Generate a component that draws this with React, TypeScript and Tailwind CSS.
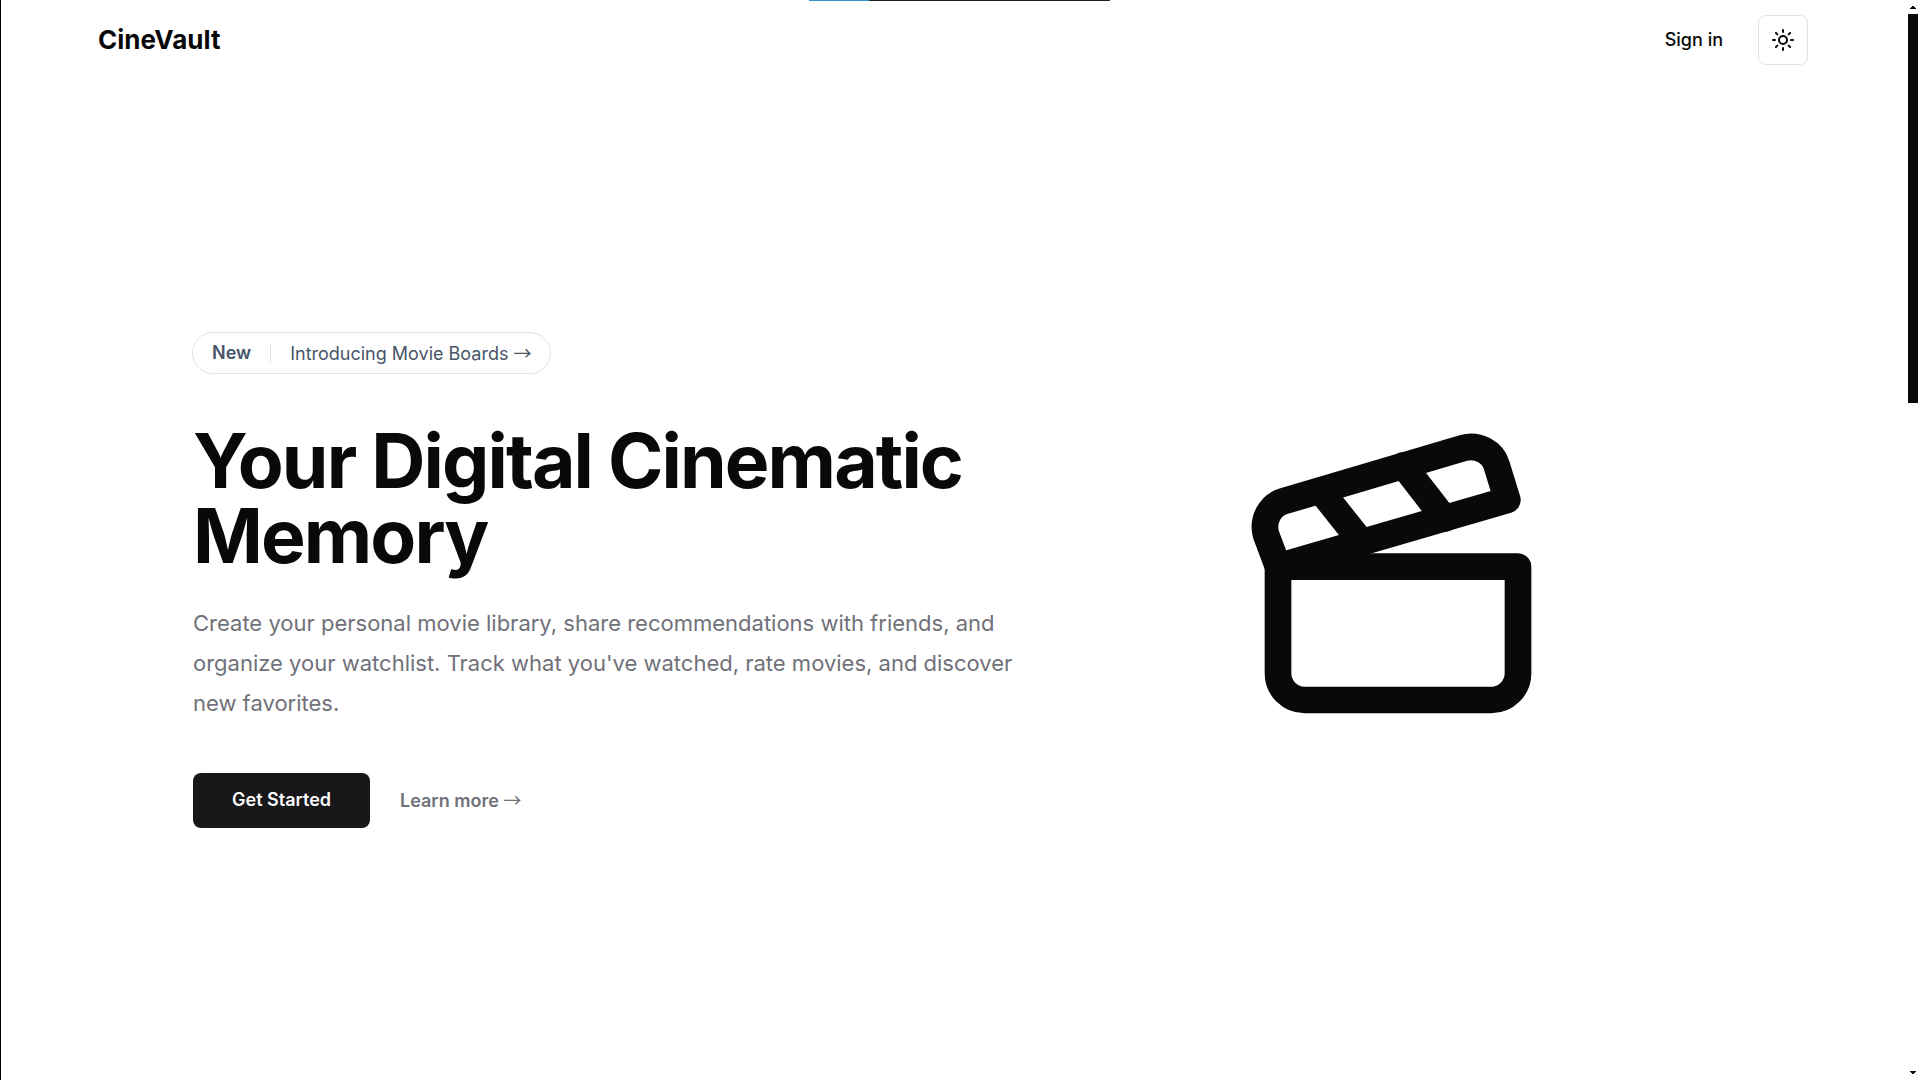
import { Clapperboard, Sun } from "lucide-react";

function LoadingStrip() {
  return (
    <div className="absolute inset-x-0 top-0 flex h-px justify-center pr-0.5" aria-hidden="true">
      <div className="flex h-px w-[301px]">
        <div className="w-[60px] bg-[#2f95cf]" />
        <div className="grow bg-[#202020]" />
      </div>
    </div>
  );
}

function Arrow() {
  return <span className="font-['Noto_Sans_CJK_JP',sans-serif] font-normal">→</span>;
}

function Header() {
  return (
    <header className="flex h-20 items-center justify-between px-[97px]">
      <a href="#" className="text-[26px] font-bold leading-8">
        CineVault
      </a>
      <nav className="flex items-center gap-[35px]">
        <a href="#sign-in" className="text-lg font-medium leading-6">
          Sign in
        </a>
        <button
          type="button"
          aria-label="Toggle theme"
          className="flex size-[50px] items-center justify-center rounded-lg border border-[#e4e4e7]"
        >
          <Sun className="size-6" />
        </button>
      </nav>
    </header>
  );
}

function Hero() {
  return (
    <main className="flex grow items-center">
      <div className="mx-auto flex w-full max-w-[1600px] items-center px-10">
        <div className="w-[840px] shrink-0">
          <a
            href="#boards"
            className="flex h-10 w-fit items-center gap-[19px] rounded-full px-[19px] text-lg leading-8 text-[#475569] ring-1 ring-[#e4e4e7]"
          >
            <span className="font-semibold">New</span>
            <span className="h-5 w-px bg-[#e4e4e7]" />
            <span>
              Introducing Movie Boards <Arrow />
            </span>
          </a>
          <h1 className="mt-[50px] text-[75px] font-bold leading-[75px] tracking-tight">
            Your Digital Cinematic Memory
          </h1>
          <p className="mt-[30px] text-[22px] leading-10 text-[#71717a]">
            Create your personal movie library, share recommendations with friends, and organize
            your watchlist. Track what you've watched, rate movies, and discover new favorites.
          </p>
          <div className="mt-[50px] flex items-center gap-[30px]">
            <button
              type="button"
              className="h-[55px] rounded-lg bg-[#18181b] px-[39px] text-lg font-semibold text-[#fafafa]"
            >
              Get Started
            </button>
            <a href="#features" className="text-lg font-semibold leading-8 text-[#71717a]">
              Learn more <Arrow />
            </a>
          </div>
        </div>
        <div className="ml-[50px] flex grow justify-center">
          <Clapperboard className="size-80" />
        </div>
      </div>
    </main>
  );
}

function ScrollRail() {
  return (
    <div className="flex w-[15px] flex-col items-center justify-between py-1.5 pl-px" aria-hidden="true">
      <svg className="h-[3px] w-[6px] shrink-0" viewBox="0 0 6 3" shapeRendering="crispEdges">
        <path d="M2 0h2v1h1v1h1v1H0V2h1V1h1z" fill="#09090b" />
      </svg>
      <div className="mt-[5px] flex w-full grow justify-center">
        <div className="h-[36.8%] w-[10px] bg-[#09090b]" />
      </div>
      <svg className="h-[3px] w-[6px] shrink-0" viewBox="0 0 6 3" shapeRendering="crispEdges">
        <path d="M0 0h6v1H5v1H4v1H2V2H1V1H0z" fill="#09090b" />
      </svg>
    </div>
  );
}

export default function App() {
  return (
    <div className="relative flex min-h-screen border-l border-black bg-white font-[Inter,sans-serif] text-[#09090b]">
      <div className="flex min-w-0 grow flex-col">
        <Header />
        <Hero />
      </div>
      <ScrollRail />
      <LoadingStrip />
    </div>
  );
}
